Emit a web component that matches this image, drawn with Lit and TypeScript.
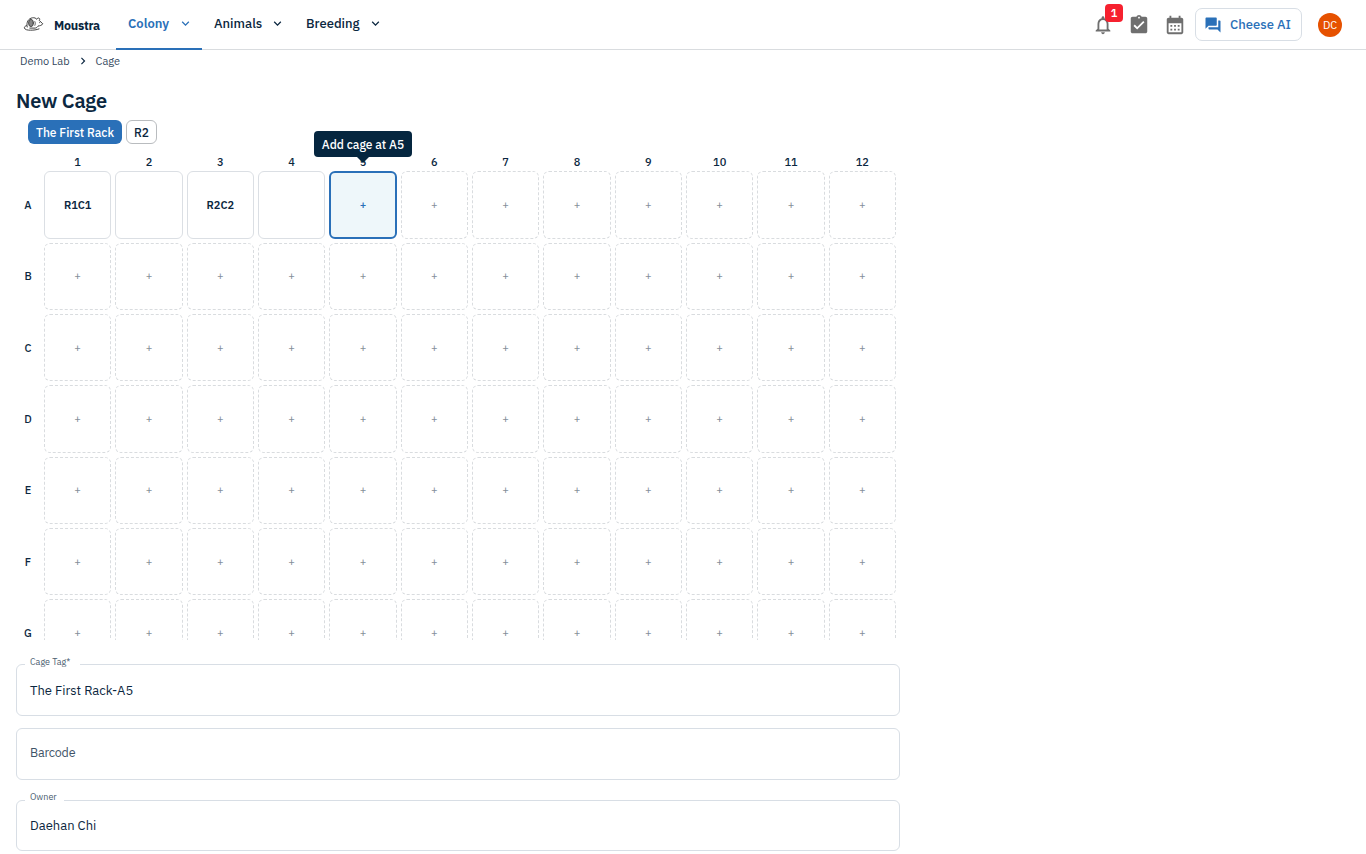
import { LitElement, html, css, svg } from 'lit';
import { customElement } from 'lit/decorators.js';

const BELL = 'M12 22c1.1 0 2-.9 2-2h-4c0 1.1.9 2 2 2m6-6v-5c0-3.07-1.63-5.64-4.5-6.32V4c0-.83-.67-1.5-1.5-1.5s-1.5.67-1.5 1.5v.68C7.64 5.36 6 7.92 6 11v5l-2 2v1h16v-1zm-2 1H8v-6c0-2.48 1.51-4.5 4-4.5s4 2.02 4 4.5z';
const TASK = 'M19 3h-4.18C14.4 1.84 13.3 1 12 1c-1.3 0-2.4.84-2.82 2H5c-1.1 0-2 .9-2 2v14c0 1.1.9 2 2 2h14c1.1 0 2-.9 2-2V5c0-1.1-.9-2-2-2m-7 0c.55 0 1 .45 1 1s-.45 1-1 1-1-.45-1-1 .45-1 1-1m-2 14-4-4 1.41-1.41L10 14.17l6.59-6.59L18 9z';
const CAL = 'M19 4h-1V2h-2v2H8V2H6v2H5c-1.11 0-1.99.9-1.99 2L3 20c0 1.1.89 2 2 2h14c1.1 0 2-.9 2-2V6c0-1.1-.9-2-2-2m0 16H5V10h14zM9 14H7v-2h2zm4 0h-2v-2h2zm4 0h-2v-2h2zm-8 4H7v-2h2zm4 0h-2v-2h2zm4 0h-2v-2h2z';
const CHAT = 'M21 6h-2v9H6v2c0 .55.45 1 1 1h11l4 4V7c0-.55-.45-1-1-1m-4 6V3c0-.55-.45-1-1-1H3c-.55 0-1 .45-1 1v14l4-4h10c.55 0 1-.45 1-1';
const CHEVRON = 'M7.41 8.59 12 13.17l4.59-4.58L18 10l-6 6-6-6z';
const CHEVRON_RIGHT = 'M10 6 8.59 7.41 13.17 12l-4.58 4.59L10 18l6-6z';

const icon = (d: string, size: number) =>
  html`<svg width=${size} height=${size} viewBox="0 0 24 24" fill="currentColor">${svg`<path d=${d}></path>`}</svg>`;

@customElement('app-root')
export class AppRoot extends LitElement {
  static styles = css`
    :host {
      display: block;
      height: 854px;
      overflow: hidden;
      background: #fff;
      color: #0b2740;
      font-family: 'IBM Plex Sans', 'Noto Sans', sans-serif;
      font-size: 12.5px;
    }
    * { box-sizing: border-box; }
    svg { display: block; flex: none; }
    header {
      display: flex;
      height: 50px;
      border-bottom: 1px solid #d9dcdf;
      padding-left: 23px;
      padding-right: 24px;
    }
    .brand { display: flex; align-items: center; width: 93px; height: 48px; gap: 10px; font-weight: 700; font-size: 12.5px; letter-spacing: -0.25px; }
    .brand span { line-height: 18px; padding-top: 2px; }
    .tab {
      display: flex;
      align-items: center;
      justify-content: space-between;
      height: 50px;
      padding: 0 9px 3px 12px;
      font-size: 13px;
      font-weight: 500;
    }
    .tab.active { color: #2a70b8; border-bottom: 2px solid #2a70b8; padding-bottom: 1px; font-weight: 600; }
    .colony { width: 86px; }
    .animals { width: 92px; }
    .breeding { width: 98px; }
    .actions { margin-left: auto; display: flex; align-items: center; height: 49px; color: #6f6f6f; }
    .bell { position: relative; margin-right: 14px; }
    .badge {
      position: absolute;
      left: 13px;
      top: -9.5px;
      width: 18px;
      height: 18px;
      border-radius: 4px;
      background: #f6212f;
      color: #fff;
      text-align: center;
      font-size: 11px;
      font-weight: 600;
      line-height: 18px;
    }
    .task { margin-right: 14px; }
    .cal { margin-right: 9px; }
    .ai {
      display: flex;
      align-items: center;
      width: 107px;
      height: 33px;
      padding-left: 8px;
      gap: 8px;
      border: 1px solid #d8dee5;
      border-radius: 7px;
      color: #2a70b8;
      font-size: 13px;
      font-weight: 500;
      white-space: nowrap;
    }
    .avatar {
      width: 24px;
      height: 24px;
      margin-left: 16px;
      border-radius: 50%;
      background: #e65100;
      color: #fff;
      font-size: 11px;
      line-height: 25px;
      text-align: center;
    }
    .crumbs { display: flex; align-items: center; height: 22px; padding-left: 20px; font-size: 11px; color: #34495e; }
    .crumbs svg { margin: 0 6px 0 6px; color: #0b2740; }
    h1 { margin: 14px 0 0 16px; height: 30px; line-height: 30px; font-size: 20px; font-weight: 600; letter-spacing: -0.2px; }
    .racks { display: flex; gap: 4px; margin: 4px 0 0 28px; height: 24px; }
    .chip { height: 24px; line-height: 25px; border-radius: 6px; text-align: center; font-size: 12px; font-weight: 500; white-space: nowrap; }
    .chip.on { width: 94px; background: #2a70b8; color: #fff; }
    .chip.off { width: 31px; border: 1px solid #b9bcbf; line-height: 24px; }
    .viewport { width: 900px; height: 488px; margin-top: 8px; padding: 0 4px 0 16px; clip-path: inset(-40px 0 0 0); }
    .grid {
      display: grid;
      grid-template-columns: 24px repeat(12, 1fr);
      grid-template-rows: 15.3px repeat(7, 67.33px);
      column-gap: 4px;
      row-gap: 4px;
      text-align: center;
      font-size: 11px;
      font-weight: 500;
    }
    .col { line-height: 20px; }
    .row { display: flex; align-items: center; justify-content: center; }
    .cell {
      display: flex;
      align-items: center;
      justify-content: center;
      border: 1px dashed #d9dcdf;
      border-radius: 6px;
      color: #858f99;
      font-size: 11px;
      font-weight: 400;
      position: relative;
    }
    .cell.filled { border: 1px solid #dbdfe4; color: #0b2740; font-weight: 600; }
    .cell.selected { border: 2px solid #2a70b8; background: #eef7fa; color: #2a70b8; font-weight: 500; }
    .tip {
      position: absolute;
      left: 50%;
      bottom: 80px;
      transform: translateX(-50%);
      width: 98px;
      height: 26px;
      border-radius: 4px;
      background: #05263f;
      color: #fff;
      font-size: 12px;
      font-weight: 500;
      line-height: 27px;
      white-space: nowrap;
    }
    .tip::after {
      content: '';
      position: absolute;
      left: 43px;
      top: 26px;
      border: 6px solid transparent;
      border-bottom: 0;
      border-top-color: #05263f;
    }
    .field {
      position: relative;
      display: flex;
      align-items: center;
      width: 884px;
      height: 51px;
      margin-left: 16px;
      padding-left: 13px;
      border: 1px solid #d8dee5;
      border-radius: 6px;
      font-size: 13px;
    }
    .tag { margin-top: 24px; height: 52px; }
    .barcode { margin-top: 12px; height: 52px; padding-bottom: 4px; color: #3f5468; font-size: 12.5px; letter-spacing: -0.2px; }
    .owner { margin-top: 20px; }
    .label {
      position: absolute;
      left: 8px;
      top: -9px;
      padding-left: 5px;
      background: #fff;
      font-size: 9px;
      line-height: 12px;
      color: #4a5d6f;
      white-space: nowrap;
    }
    .wide { width: 55px; }
    .short { width: 39px; top: -10px; }
  `;

  private names: Record<string, string> = { A1: 'R1C1', A2: '', A3: 'R2C2', A4: '' };

  private cell(id: string) {
    if (id === 'A5') return html`<div class="cell selected">+<div class="tip">Add cage at A5</div></div>`;
    return id in this.names
      ? html`<div class="cell filled">${this.names[id]}</div>`
      : html`<div class="cell">+</div>`;
  }

  render() {
    const cols = Array.from({ length: 12 }, (_, i) => i + 1);
    return html`
      <header>
        <div class="brand">
          <svg width="21" height="16" viewBox="0 0 21 16" fill="none" stroke="#444" stroke-width="1" stroke-linecap="round" stroke-linejoin="round">
            <path d="M4.2 11C3 6 5.6 2.4 9.4 1.8c2-.3 3.4.3 4.4 1.5.5-1.5 2.3-1.8 2.8-.6.3.7 0 1.3-.4 1.7l3.6 3.4c-1 1.6-2.9 2-4.8 2.2-.4 1.1-1.4 1.8-2.7 2.1H6.8"></path>
            <path d="M3.6 9.6C2 10 1.2 11 1.4 12c.5 1.8 3.2 2.2 6.2 2.2 3 0 5.9-.3 8.4-1.3"></path>
            <ellipse cx="8" cy="7" rx="2.4" ry="3.6" fill="#888"></ellipse>
            <path d="M11.9 5.6c.5 1.2.5 2.6 0 3.7M16.6 6.6h.1" stroke-width="0.9"></path>
          </svg>
          <span>Moustra</span>
        </div>
        <div class="tab active colony">Colony ${icon(CHEVRON, 15)}</div>
        <div class="tab animals">Animals ${icon(CHEVRON, 15)}</div>
        <div class="tab breeding">Breeding ${icon(CHEVRON, 15)}</div>
        <div class="actions">
          <div class="bell">${icon(BELL, 22)}<span class="badge">1</span></div>
          <div class="task">${icon(TASK, 22)}</div>
          <div class="cal">${icon(CAL, 22)}</div>
          <div class="ai">${icon(CHAT, 18)}<span>Cheese AI</span></div>
          <div class="avatar">DC</div>
        </div>
      </header>
      <nav class="crumbs"><span>Demo Lab</span>${icon(CHEVRON_RIGHT, 14)}<span>Cage</span></nav>
      <h1>New Cage</h1>
      <div class="racks"><div class="chip on">The First Rack</div><div class="chip off">R2</div></div>
      <div class="viewport">
        <div class="grid">
          <div></div>
          ${cols.map((c) => html`<div class="col">${c}</div>`)}
          ${[...'ABCDEFG'].map((r) => html`<div class="row">${r}</div>${cols.map((c) => this.cell(r + c))}`)}
        </div>
      </div>
      <div class="field tag"><span class="label wide">Cage Tag*</span><span>The First Rack-A5</span></div>
      <div class="field barcode"><span>Barcode</span></div>
      <div class="field owner"><span class="label short">Owner</span><span>Daehan Chi</span></div>
    `;
  }
}
